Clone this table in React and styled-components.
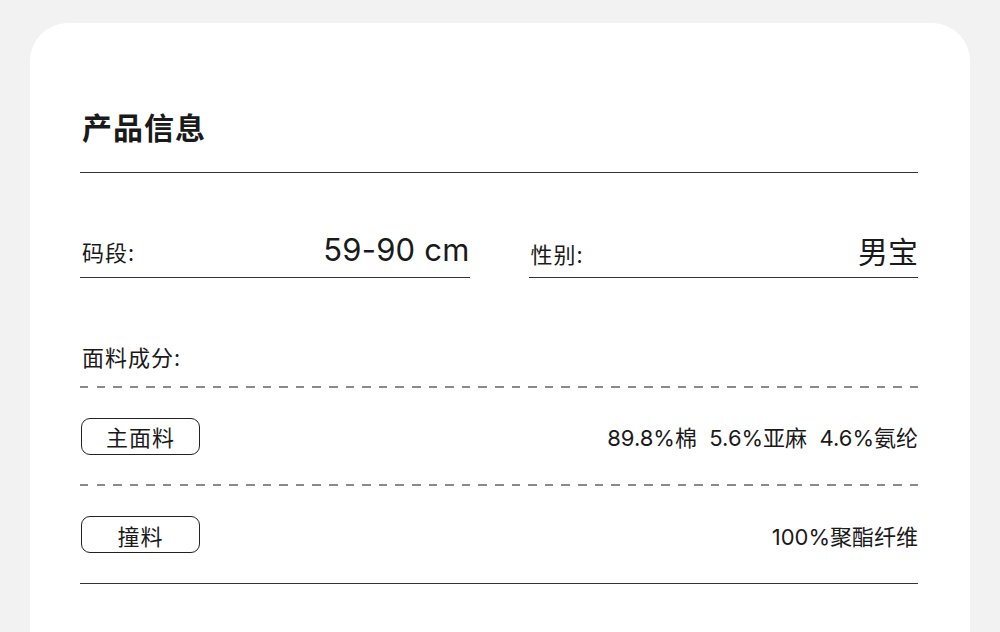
import React from 'react';
import styled, { createGlobalStyle } from 'styled-components';

const GlobalStyle = createGlobalStyle`
  html, body {
    margin: 0;
    padding: 0;
    background: #f2f2f2;
    overflow: hidden;
  }
  body {
    font-family: "Noto Sans CJK SC", "Noto Sans", sans-serif;
    color: #1a1a1a;
  }
`;

const Page = styled.div`
  padding: 23px 30px 0 30px;
  height: 632px;
  box-sizing: border-box;
`;

const Card = styled.div`
  background: #fff;
  border-radius: 38px 38px 0 0;
  height: 660px;
  padding: 0 52px 0 50px;
`;

// header with title and the solid rule beneath
const Header = styled.div`
  padding: 83px 0 26px 2px;
  border-bottom: 1px solid #333;
`;

const Title = styled.h1`
  margin: 0;
  font-size: 30px;
  line-height: 40px;
  font-weight: 700;
  letter-spacing: 1px;
`;

const FieldGrid = styled.div`
  display: grid;
  grid-template-columns: 1fr 1fr;
  column-gap: 59px;
  margin-top: 57px;
`;

const Field = styled.div`
  display: flex;
  justify-content: space-between;
  align-items: baseline;
  padding: 0 0 4px 2px;
  line-height: 40px;
  border-bottom: 1px solid #333;
`;

const Label = styled.span`
  font-size: 22px;
  letter-spacing: 1px;
`;

const Value = styled.span`
  font-size: ${p => p.$size || 30}px;
  font-family: ${p => p.$latin ? '"Inter", "Liberation Sans", sans-serif' : '"Noto Sans CJK SC", sans-serif'};
  letter-spacing: ${p => p.$latin ? '0.2px' : '0'};
`;

const SectionLabel = styled.div`
  margin-top: 63px;
  padding-left: 2px;
  font-size: 22px;
  letter-spacing: 1px;
  line-height: 30px;
`;

const Dashes = styled.div`
  height: 2px;
  margin-top: ${p => p.$top || 0}px;
  background: repeating-linear-gradient(
    to right,
    #8a8a8a 0,
    #8a8a8a 8.5px,
    transparent 8.5px,
    transparent 16.6px
  );
`;

const MaterialRow = styled.div`
  display: flex;
  justify-content: space-between;
  align-items: center;
  height: ${p => p.$last ? 97 : 96}px;
  border-bottom: ${p => p.$last ? '1px solid #333' : 'none'};
`;

const Pill = styled.div`
  width: 117px;
  height: 35px;
  margin-left: 1px;
  border: 1px solid #222;
  border-radius: 9px;
  display: flex;
  align-items: center;
  justify-content: center;
  font-size: 22px;
  letter-spacing: 1px;
`;

const Composition = styled.div`
  font-family: "Inter", "Noto Sans CJK SC", sans-serif;
  font-size: 22px;
  white-space: pre;
`;

const materials = [
  { name: '主面料', value: '89.8%棉  5.6%亚麻  4.6%氨纶' },
  { name: '撞料', value: '100%聚酯纤维' },
];

export default function App() {
  return (
    <>
      <GlobalStyle />
      <Page>
        <Card>
          <Header>
            <Title>产品信息</Title>
          </Header>
          <FieldGrid>
            <Field>
              <Label>码段:</Label>
              <Value $latin $size={31}>59-90 cm</Value>
            </Field>
            <Field>
              <Label>性别:</Label>
              <Value>男宝</Value>
            </Field>
          </FieldGrid>
          <SectionLabel>面料成分:</SectionLabel>
          <Dashes $top={15} />
          {materials.map((m, i) => (
            <React.Fragment key={m.name}>
              <MaterialRow $last={i === materials.length - 1}>
                <Pill>{m.name}</Pill>
                <Composition>{m.value}</Composition>
              </MaterialRow>
              {i < materials.length - 1 && <Dashes />}
            </React.Fragment>
          ))}
        </Card>
      </Page>
    </>
  );
}
